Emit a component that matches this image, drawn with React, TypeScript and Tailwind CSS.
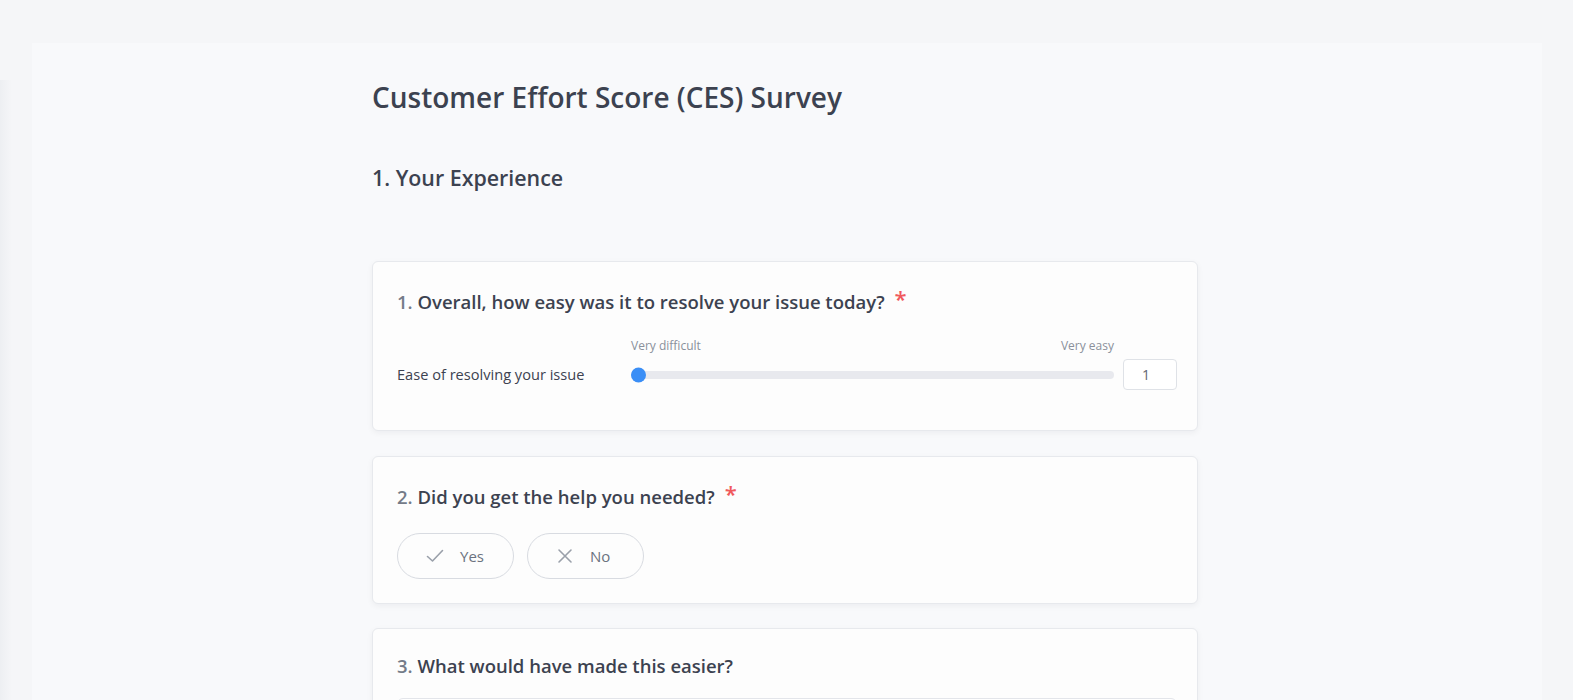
import { ReactNode } from 'react';

function CheckGlyph() {
  return (
    <svg width="20" height="20" viewBox="0 0 20 20" fill="none" className="text-[#9aa0aa]">
      <path d="M2.5 10.5 L7.5 15 L17.5 4.5" stroke="currentColor" strokeWidth="1.6" strokeLinecap="round" strokeLinejoin="round" />
    </svg>
  );
}

function CrossGlyph() {
  return (
    <svg width="20" height="20" viewBox="0 0 20 20" fill="none" className="text-[#9aa0aa]">
      <path d="M4 4 L16 16 M16 4 L4 16" stroke="currentColor" strokeWidth="1.6" strokeLinecap="round" />
    </svg>
  );
}

function Card({
  num,
  title,
  required,
  tight,
  children,
}: {
  num: number;
  title: string;
  required?: boolean;
  tight?: boolean;
  children?: ReactNode;
}) {
  return (
    <div
      className={`rounded-[6px] border border-[#e7e9ed] bg-[#fdfdfd] pb-[24px] pl-[24px] pr-[20px] shadow-[0_2px_6px_rgba(15,23,42,0.05)] ${
        tight ? 'pt-[23px]' : 'pt-[26px]'
      }`}
    >
      <div className="flex items-start text-[18.5px] leading-[28px] font-semibold text-[#3c4250]">
        <span>
          <span className="text-[#747b88]">{num}.</span> {title}
        </span>
        {required && <span className="ml-[10px] mt-[-4px] text-[22px] leading-[28px] text-[#f0595c]">*</span>}
      </div>
      {children}
    </div>
  );
}

function ChoiceButton({ label, icon }: { label: string; icon: ReactNode }) {
  return (
    <button className="flex h-[46px] w-[117px] items-center rounded-full border border-[#d8dbe1] bg-[#fdfdfd] pl-[27px] text-[15px] text-[#6b7280]">
      {icon}
      <span className="ml-[15px]">{label}</span>
    </button>
  );
}

export default function App() {
  const value = 1;
  const pct = ((value - 1) / 6) * 100;

  return (
    <div className="flex min-h-screen bg-white font-['Open_Sans','Noto_Sans',sans-serif]">
      <div className="relative h-[700px] w-[1573px] overflow-hidden bg-[#f5f6f8] pl-[32px] pt-[43px]">
        {/* faint shadow on the left edge */}
        <div className="absolute bottom-0 left-0 top-[80px] w-[12px] bg-linear-to-r from-[#edeff2] to-[#f5f6f8]" />

        <div className="h-full w-[1510px] bg-[#f8f9fb] pl-[340px] pt-[36px]">
          <div className="w-[826px]">
            <h1 className="text-[28px] leading-[36px] font-semibold text-[#3c4250]">
              Customer Effort Score (CES) Survey
            </h1>
            <h2 className="mt-[48px] text-[21.4px] leading-[30px] font-semibold text-[#3c4250]">
              1. Your Experience
            </h2>

            <div className="mt-[68px] flex flex-col">
              {/* Question 1 */}
              <Card num={1} title="Overall, how easy was it to resolve your issue today?" required>
                <div className="mt-[22px] pb-[16px]">
                  <div className="flex">
                    <div className="w-[234px] shrink-0" />
                    <div className="flex w-[483px] justify-between text-[12px] leading-[16px] text-[#8a909b]">
                      <span>Very difficult</span>
                      <span>Very easy</span>
                    </div>
                  </div>
                  <div className="mt-[5px] flex items-center">
                    <div className="w-[234px] shrink-0 text-[14.6px] text-[#3c4250]">Ease of resolving your issue</div>
                    <div className="relative h-[8px] w-[483px] rounded-full bg-[#e8e9ee]">
                      <div
                        className="absolute top-1/2 h-[15px] w-[15px] -translate-y-1/2 rounded-full bg-[#3a8ef6]"
                        style={{ left: `calc(${pct}% - ${(pct / 100) * 15}px)` }}
                      />
                    </div>
                    <div className="ml-[9px] flex h-[31px] w-[54px] items-center rounded-[4px] border border-[#dfe2e7] bg-white pl-[18px] text-[14px] text-[#5f6672]">
                      {value}
                    </div>
                  </div>
                </div>
              </Card>

              {/* Question 2 */}
              <div className="mt-[25px]">
                <Card num={2} title="Did you get the help you needed?" required>
                  <div className="mt-[22px] flex gap-[13px]">
                    <ChoiceButton label="Yes" icon={<CheckGlyph />} />
                    <ChoiceButton label="No" icon={<CrossGlyph />} />
                  </div>
                </Card>
              </div>

              {/* Question 3 */}
              <div className="mt-[24px]">
                <Card num={3} title="What would have made this easier?" tight>
                  <textarea
                    className="mt-[18px] block h-[100px] w-full resize-none rounded-[6px] border border-[#e3e5ea] bg-white"
                    readOnly
                  />
                </Card>
              </div>
            </div>
          </div>
        </div>
      </div>
    </div>
  );
}
